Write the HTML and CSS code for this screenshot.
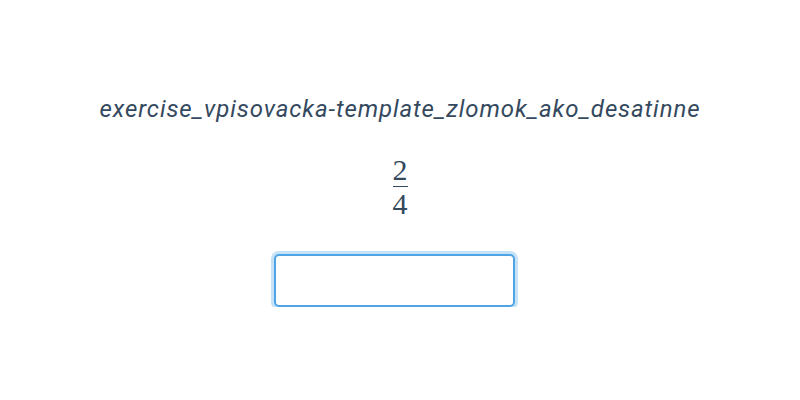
FILE: index.html
```html
<!DOCTYPE html>
<html lang="sk">
<head>
    <meta charset="UTF-8">
    <title>exercise</title>
    <link rel="stylesheet" href="styles.css">
</head>
<body>
    <div class="exercise">
        <div class="title">exercise_vpisovacka-template_zlomok_ako_desatinne</div>
        <div class="fraction">
            <span class="num">2</span>
            <span class="bar"></span>
            <span class="den">4</span>
        </div>
        <input type="text" class="answer" autofocus>
    </div>
</body>
</html>
```

FILE: styles.css
```css
body {
    margin: 0;
    background: #ffffff;
    font-family: 'Roboto', sans-serif;
    color: #34495e;
}
.exercise {
    display: flex;
    flex-direction: column;
    align-items: center;
    padding-top: 94px;
}
.title {
    font-size: 24px;
    font-style: italic;
    letter-spacing: 0.9px;
    line-height: 30px;
}
.fraction {
    margin-top: 32px;
    display: flex;
    flex-direction: column;
    align-items: center;
    font-family: 'Liberation Serif', serif;
    font-size: 30px;
    line-height: 28px;
}
.bar {
    width: 15px;
    height: 1px;
    background: #34495e;
    margin: 2px 0 3px;
}
.answer {
    margin-top: 36px;
    width: 241px;
    height: 53px;
    box-sizing: border-box;
    border: 2px solid #4ea4e4;
    border-radius: 5px;
    box-shadow: 0 0 0 3px #c6e2f6;
    outline: none;
    font-family: 'Roboto', sans-serif;
    font-size: 20px;
    padding: 0 10px;
    margin-left: -11px;
}
```
